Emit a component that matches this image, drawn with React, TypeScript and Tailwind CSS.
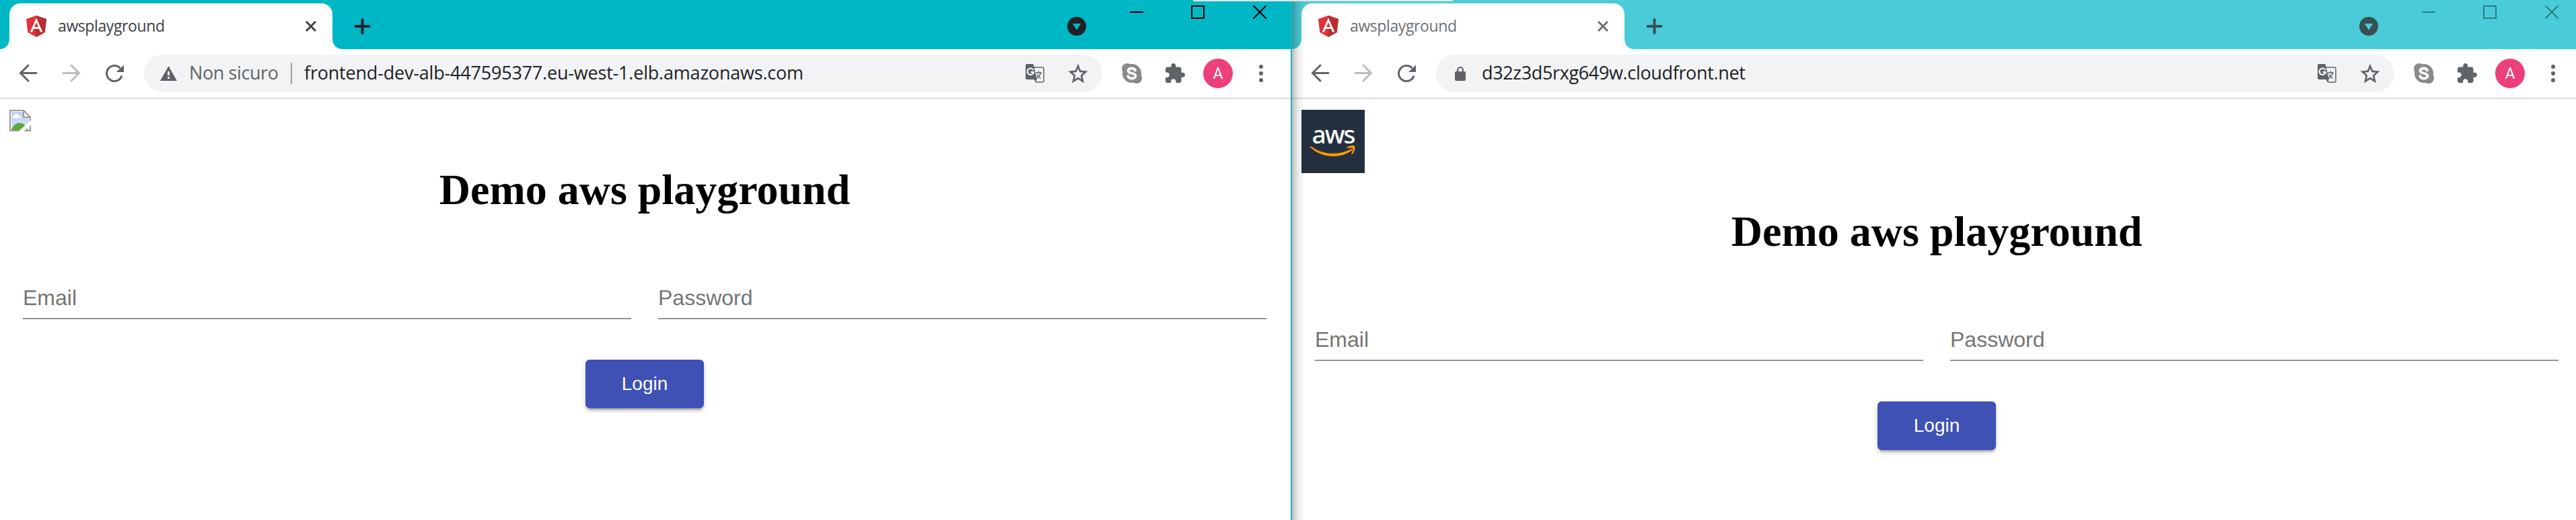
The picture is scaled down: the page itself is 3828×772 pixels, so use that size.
import React from "react";

const UI = "font-['Open_Sans','Noto_Sans',sans-serif]";

function AngularIcon() {
  return (
    <svg width="30" height="32" viewBox="0 0 30 32" className="block">
      <path d="M15 0 0 5.3l2.3 19.8L15 32l12.7-6.9L30 5.3z" fill="#e23237" />
      <path d="M15 0v32l12.7-6.9L30 5.3z" fill="#b52e31" />
      <path d="M15 3.6 5.7 24.4h3.4l1.9-4.6h8l1.9 4.6h3.4zM15 10.2l2.8 6.9h-5.6z" fill="#fff" fillRule="evenodd" />
    </svg>
  );
}

function BrokenImage() {
  return (
    <svg width="32" height="32" viewBox="0 0 32 32" className="block">
      <defs>
        <linearGradient id="sky" x1="0" y1="0" x2="0" y2="1">
          <stop offset="0" stopColor="#c0d0f2" />
          <stop offset="1" stopColor="#d5e2fa" />
        </linearGradient>
      </defs>
      <path d="M1 1h20l10 10v20H1z" fill="#fff" stroke="#9a9a9a" strokeWidth="2" />
      <path d="M3 3h17v9h9v17H3z" fill="url(#sky)" />
      <path d="M4 12c0-2 2-3 3-3 1-4 6-4 7 0 2 0 3 1 3 3z" fill="#fff" />
      <path d="M3 30c2-6 6-10.500 12-10.500s10 4.500 12 10.500z" fill="#5bab3a" />
      <path d="M21 1v10h10z" fill="#fff" stroke="#9a9a9a" strokeWidth="2" />
      <path d="M13.500 32 32 15.500v7L21.500 32z" fill="#fff" />
    </svg>
  );
}

function AwsLogo() {
  return (
    <div className="flex h-[94px] w-[94px] flex-col items-center bg-[#232f3e] pt-[18px]">
      <div className="h-[35px] font-['Noto_Sans',sans-serif] text-[37px] leading-[35px] font-medium tracking-[-2px] text-white">aws</div>
      <svg width="68" height="18" viewBox="0 0 68 18" className="block">
        <path d="M1 1C18 14 42 15 60 5.500c2-1 3 .8 1.500 2C45 20 17 19 .6 3 0 2 .4.600 1 1z" fill="#f90" />
        <path d="M54.500 3c4-3.500 10-3.500 11.500-2s0 8.500-3.600 12c-.7.600-1.400.200-1-.7 1-2.700 2.500-7 1.700-8-1-1.200-5.200-.6-8-.3-.9 0-1-.6-.6-1z" fill="#f90" />
      </svg>
    </div>
  );
}

function NavIcons() {
  return (
    <svg width="214" height="56" viewBox="0 0 214 56" className="block shrink-0" fill="none">
      <path d="M54 27.500H30.500M42 16l-11.500 11.500L42 39" stroke="#5f6368" strokeWidth="3" strokeLinecap="round" />
      <path d="M94 27.500h23.500M106 16l11.500 11.500L106 39" stroke="#babcbe" strokeWidth="3" strokeLinecap="round" />
      <path d="M181 31.500A11.500 11.500 0 1 1 178.500 20.200" stroke="#5f6368" strokeWidth="3" />
      <path d="M184 15.500v10.500h-11z" fill="#5f6368" />
    </svg>
  );
}

function TranslateIcon() {
  return (
    <svg width="28" height="28" viewBox="0 0 28 28" className="block" fill="none">
      <path d="M12 5h13a2 2 0 0 1 2 2v18a2 2 0 0 1-2 2H16l-3-5" stroke="#5f6368" strokeWidth="1.500" />
      <path d="M2 0h9.500l5.500 23H2a2 2 0 0 1-2-2V2a2 2 0 0 1 2-2zM13 22h4l-2.500 5z" fill="#5f6368" />
      <path d="M11.500 9A4.700 4.700 0 1 0 12 12H7.500" stroke="#fff" strokeWidth="2" />
      <path d="M15 13h9M19.500 10.500V13M22.500 13c-1 4-3.500 6.500-6 8M17 15.500c1 2 3 4.500 5.500 6" stroke="#5f6368" strokeWidth="1.500" />
    </svg>
  );
}

function StarIcon() {
  return (
    <svg width="28" height="28" viewBox="2 2 20 19" preserveAspectRatio="none" className="block" fill="#5f6368" stroke="#5f6368" strokeWidth="0.3">
      <path d="M22 9.240l-7.190-.62L12 2 9.190 8.630 2 9.240l5.460 4.730L5.820 21 12 17.270 18.180 21l-1.630-7.030L22 9.240zM12 15.400l-3.760 2.270 1-4.280-3.320-2.880 4.380-.38L12 6.100l1.710 4.040 4.380.38-3.320 2.880 1 4.280L12 15.400z" />
    </svg>
  );
}

function SkypeIcon() {
  return (
    <svg width="30" height="30" viewBox="0 0 30 30" className="block">
      <circle cx="8" cy="8" r="8" fill="#8e8e8e" />
      <circle cx="22" cy="22" r="8" fill="#858585" />
      <circle cx="15" cy="15" r="14" fill="#8a8a8a" />
      <path d="M20 10.500C19 8 16.500 7.500 14.500 7.500c-3 0-5 1.500-5 3.500 0 5 11 2.500 11 7.500 0 2.500-2.500 4-5.500 4-2.700 0-5-1.200-5.700-3.500" fill="none" stroke="#fff" strokeWidth="3.800" strokeLinecap="round" />
    </svg>
  );
}

function PuzzleIcon() {
  return (
    <svg width="29" height="29" viewBox="2 1 21 21" className="block" fill="#5f6368">
      <path d="M20.500 11H19V7c0-1.100-.9-2-2-2h-4V3.500C13 2.120 11.880 1 10.500 1S8 2.120 8 3.500V5H4c-1.100 0-1.990.9-1.990 2v3.800H3.500c1.490 0 2.700 1.210 2.700 2.700s-1.210 2.700-2.700 2.700H2V20c0 1.100.9 2 2 2h3.800v-1.500c0-1.490 1.210-2.700 2.700-2.700 1.490 0 2.700 1.210 2.700 2.700V22H17c1.100 0 2-.9 2-2v-4h1.500c1.380 0 2.500-1.120 2.500-2.500S21.880 11 20.500 11z" />
    </svg>
  );
}

function WindowControls({ active }: { active: boolean }) {
  const ink = active ? "#000000" : "#2d7c82";
  return (
    <svg width="322" height="68" viewBox="1586 5 322 68" className="block shrink-0" fill="none">
      <circle cx="1600" cy="39" r="14" fill={active ? "#202124" : "#375054"} />
      <path d="M1593.700 35h12.600l-6.300 9.500z" fill={active ? "#00b7c6" : "#49ccd7"} />
      <path d="M1679 18h20M1771 9h18v18h-18zM1862.500 8.500l19 19M1881.500 8.500l-19 19" stroke={ink} strokeWidth="2" />
    </svg>
  );
}

function TitleBar({ active }: { active: boolean }) {
  return (
    <div className={`flex h-[73px] w-full pt-[5px] ${active ? "bg-[#00b7c6]" : "bg-[#49ccd7]"}`}>
      <svg width="14" height="68" viewBox="0 0 14 68" className="block shrink-0">
        <path d="M-2 68c10 0 16-6 16-16v16z" fill="#fff" />
      </svg>
      <div className="flex h-[68px] w-[480px] shrink-0 items-center rounded-t-[16px] bg-white pl-[25px] pr-[24px]">
        <AngularIcon />
        <span className={`${UI} ml-[17px] flex-1 pb-[2px] text-[23px] leading-[30px] tracking-[-0.4px] ${active ? "text-[#3c4043]" : "text-[#6d7073]"}`}>awsplayground</span>
        <svg width="16" height="16" viewBox="0 0 16 16" className="block">
          <path d="m1 1 14 14M15 1 1 15" stroke={active ? "#3c4043" : "#6d7073"} strokeWidth="2.900" />
        </svg>
      </div>
      <svg width="60" height="68" viewBox="0 0 60 68" className="block shrink-0">
        <path d="M0 52c0 10 6 16 16 16H0z" fill="#fff" />
        <path d="M34.500 34h20M44.500 24v20" stroke={active ? "#202124" : "#375054"} strokeWidth="4" strokeLinecap="round" />
      </svg>
      <div className="flex-1" />
      <WindowControls active={active} />
      {active && <div className="w-[10px] shrink-0" />}
    </div>
  );
}

function Toolbar({ secure, url, active }: { secure: boolean; url: string; active: boolean }) {
  return (
    <div className="flex h-[74px] w-full items-start border-b-2 border-[#dadce0] bg-white pt-2">
      <NavIcons />
      <div className="flex h-[56px] w-[1424px] shrink-0 items-center rounded-full bg-[#f1f3f4] pr-[22px] pl-6">
        {secure ? (
          <>
            <svg width="24" height="24" viewBox="0 0 24 24" className="block" fill="none">
              <rect x="4" y="9" width="16" height="14" rx="2" fill="#5f6368" />
              <path d="M8 10V7a4 4 0 0 1 8 0v3" stroke="#5f6368" strokeWidth="2.200" />
            </svg>
            <span className={`${UI} ml-[20px] flex-1 pb-[2px] text-[27px] leading-[36px] tracking-[-0.35px] text-[#202124]`}>{url}</span>
          </>
        ) : (
          <>
            <svg width="25" height="22" viewBox="0 0 25 22" className="block" fill="none">
              <path d="M12.500 0 25 22H0z" fill="#5f6368" />
              <path d="M12.500 8v6M12.500 16v3" stroke="#f1f3f4" strokeWidth="2.800" />
            </svg>
            <span className={`${UI} ml-[18px] w-[151px] pb-[2px] text-[27px] leading-[36px] tracking-[-0.4px] text-[#5f6368]`}>Non sicuro</span>
            <div className="h-8 w-[2px] bg-[#9aa0a6]" />
            <span className={`${UI} ml-[18px] flex-1 pb-[2px] text-[27px] leading-[36px] tracking-[-0.2px] text-[#202124]`}>{url}</span>
          </>
        )}
        <TranslateIcon />
        <div className="ml-9">
          <StarIcon />
        </div>
      </div>
      <div className={`flex h-[56px] items-center pl-[29px] ${active ? "w-[280px]" : "w-[270px]"}`}>
        <SkypeIcon />
        <div className="ml-[35px] pb-[2px]">
          <PuzzleIcon />
        </div>
        <div className="ml-[27px] flex size-[44px] items-center justify-center rounded-full bg-[#ec407a] font-['Roboto',sans-serif] text-[23px] leading-none text-white">A</div>
        <div className="ml-[39px] flex flex-col gap-1">
          <i className="size-[6px] rounded-full bg-[#5f6368]" />
          <i className="size-[6px] rounded-full bg-[#5f6368]" />
          <i className="size-[6px] rounded-full bg-[#5f6368]" />
        </div>
      </div>
    </div>
  );
}

function LoginPage({ logo }: { logo: React.ReactNode }) {
  return (
    <main className="flex w-[1916px] flex-col pt-4">
      <div className="pl-[14px]">{logo}</div>
      <h1 className="mt-[50px] text-center font-['Liberation_Serif',serif] text-[64px] leading-[74px] font-bold text-black">Demo aws playground</h1>
      <div className="mt-[104px] grid grid-cols-[904px_904px] gap-10 pl-[34px] font-['Liberation_Sans',sans-serif] text-[32px] leading-[36px] text-[#757575]">
        <div className="h-[51px] border-b-2 border-[#949494] pt-px">Email</div>
        <div className="h-[51px] border-b-2 border-[#949494] pt-px">Password</div>
      </div>
      <button className="mt-[60px] h-[72px] w-[176px] self-center rounded-[6px] bg-[#3f51b5] font-['Liberation_Sans',sans-serif] text-[28px] text-white shadow-[0_6px_2px_-4px_rgba(0,0,0,0.2),0_4px_4px_0_rgba(0,0,0,0.14),0_2px_10px_0_rgba(0,0,0,0.12)]">Login</button>
    </main>
  );
}

export default function App() {
  return (
    <div className="relative flex h-[772px] w-[3828px] overflow-hidden bg-white">
      <section className="w-[1918px] shrink-0 overflow-hidden">
        <TitleBar active />
        <Toolbar active secure={false} url="frontend-dev-alb-447595377.eu-west-1.elb.amazonaws.com" />
        <LoginPage logo={<BrokenImage />} />
      </section>
      <div className="w-[2px] shrink-0 bg-[#14b5c2]" />
      <section className="relative w-[1908px] shrink-0 overflow-hidden">
        <TitleBar active={false} />
        <Toolbar active={false} secure url="d32z3d5rxg649w.cloudfront.net" />
        <LoginPage logo={<AwsLogo />} />
        <div className="absolute inset-y-0 left-0 w-[18px] bg-linear-to-r from-black/25 via-black/8 to-transparent" />
      </section>
      <div className="absolute top-0 left-[1773px] h-[2px] w-[386px] bg-[#e6e6e6]" />
    </div>
  );
}
